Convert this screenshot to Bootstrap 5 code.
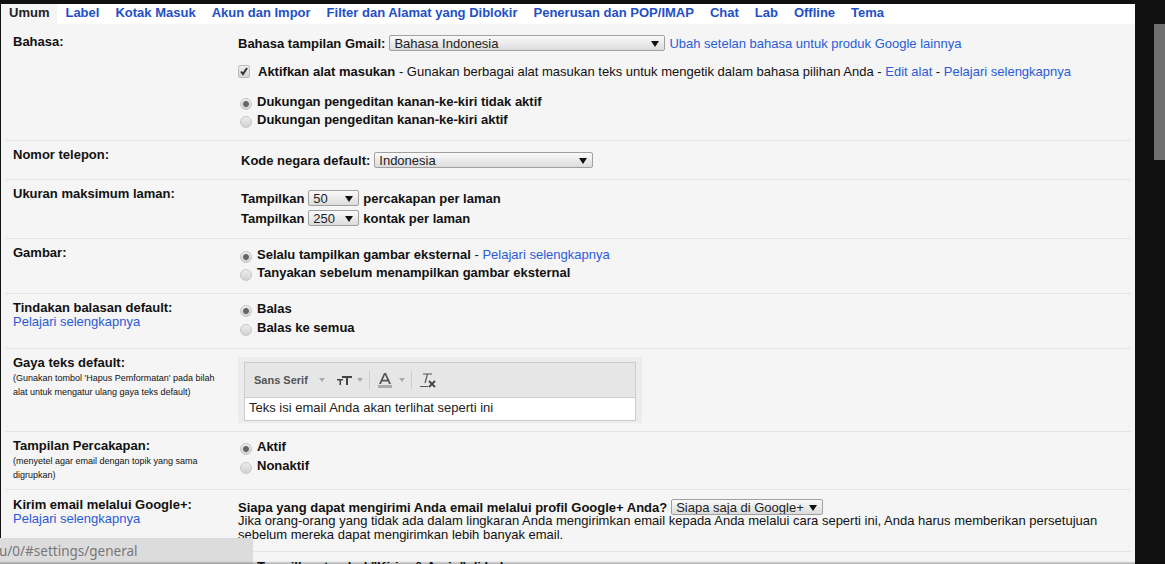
<!DOCTYPE html>
<html lang="id">
<head>
  <meta charset="UTF-8">
  <meta name="viewport" content="width=device-width, initial-scale=1.0">
  <title>Setelan Gmail</title>
  <link href="https://cdn.jsdelivr.net/npm/bootstrap@5.3.0/dist/css/bootstrap.min.css" rel="stylesheet">
  <style>
    html, body { height: 100%; overflow: hidden; }
    body {
      background: #111;
      color: #111;
      font-family: "Liberation Sans", Arial, sans-serif;
      font-size: 13px;
      line-height: 15px;
    }
    a { color: #2a5bd7; text-decoration: none; }
    .shell { width: 1134px; margin: 4px 0 0 1px; height: 560px; overflow: hidden; background: #f5f5f5; }
    .tabbar { background: #fff; height: 20px; font-weight: 700; }
    .tabbar a, .tabbar span { padding: 0 8px; line-height: 18px; }
    .tabbar a { color: #1f50c8; }
    .tab-now { background: #f5f5f5; color: #222; }
    .pane { padding: 0 4px 0 0; }
    .setrow { display: flex; border-bottom: 1px solid #e4e4e4; margin-left: 4px; }
    .setname { width: 233px; flex: none; padding-left: 8px; font-weight: 700; }
    .setname a { font-weight: 400; display: block; margin-top: -1px; }
    .setname small { display: block; width: 205px; font-weight: 400; font-size: 9px; line-height: 14px; margin-top: 1px; }
    .setval { flex: 1; }
    .setval.indent { padding-left: 3px; }
    .b { font-weight: 700; }
    .row-lang { height: 117px; padding-top: 10px; }
    .row-phone { height: 39px; padding-top: 6px; }
    .row-size { height: 59px; padding-top: 6px; }
    .row-opts { height: 55px; padding-top: 6px; }
    .row-editor { height: 83px; padding-top: 6px; }
    .row-conv { height: 58px; padding-top: 6px; }
    .row-plus { height: 62px; padding-top: 7px; }
    .row-last { padding-top: 7px; }
    .line-lang { margin-top: 1px; }
    .line-tools { margin-top: 13px; }
    .line-rtl { margin-top: 15px; }
    .line-sel { margin-top: 5px; }
    .line-sel-2 { margin-top: 4px; }
    .line-nudge { margin-top: 1px; }
    .line-img { margin-top: 2px; }
    .line-who { margin-top: 2px; }
    .plus-note { line-height: 14px; margin-top: -1px; }
    .check-label { margin-left: 8px; }
    .last-label { margin-left: 19px; }
    .gsel {
      appearance: none;
      border: 1px solid #a0a0a0;
      border-radius: 2px;
      height: 16px;
      padding: 1px 0 0 4px;
      font: 13px/14px "Liberation Sans", Arial, sans-serif;
      color: #222;
      background: url("data:image/svg+xml,%3Csvg xmlns='http://www.w3.org/2000/svg' width='8' height='7'%3E%3Cpath d='M0 1h8L4 7z' fill='%23111'/%3E%3C/svg%3E") no-repeat right 5px center, linear-gradient(#fafafa, #dcdcdc);
    }
    .w-lang { width: 276px; }
    .w-ctry { width: 219px; }
    .w-num { width: 51px; }
    .w-who { width: 152px; }
    .gcheck {
      appearance: none;
      width: 12px; height: 13px;
      border: 1px solid #bdbdbd; border-radius: 2px;
      margin: 0;
      background: url("data:image/svg+xml,%3Csvg xmlns='http://www.w3.org/2000/svg' width='10' height='11'%3E%3Cpath d='M2 5.500l2 2.500 4-6' fill='none' stroke='%23333' stroke-width='2'/%3E%3C/svg%3E") center no-repeat, linear-gradient(#f0f0f0, #d4d4d4);
    }
    .gradio {
      appearance: none;
      flex: none;
      width: 12px; height: 12px;
      border: 1px solid #c8c8c8; border-radius: 50%;
      margin: 4px 5px 0 2px;
      background: linear-gradient(#ececec, #d2d2d2);
    }
    .gradio:checked { background: radial-gradient(circle, #666 0 2.500px, transparent 3.500px), linear-gradient(#ececec, #d2d2d2); }
    .optline { display: flex; height: 19px; align-items: flex-start; }
    .optline.tight { height: 18px; }
    .editor-wrap { background: #ececec; padding: 5px 6px 2px; width: 404px; height: 66px; margin-top: 2px; }
    .editor-box { border: 1px solid #ccc; height: 59px; }
    .editor-tools { background: #e6e6e6; height: 35px; border-bottom: 1px solid #ccc; display: flex; align-items: center; padding-left: 9px; color: #555; }
    .font-name { font-size: 11px; font-weight: 700; color: #555; width: 64px; }
    .tool-size { margin-left: 11px; }
    .tool-size-arrow { margin-left: 4px; }
    .tool-sep { width: 1px; height: 18px; background: #ccc; margin: 0 8px 0 5px; }
    .tool-color { margin-top: 1px; }
    .tool-color-arrow { margin-left: 6px; }
    .editor-text { background: #fff; height: 22px; padding: 2px 4px; color: #222; }
    .status-tip {
      position: absolute; left: 0; top: 538px;
      width: 253px; height: 26px;
      background: #dcdcdc;
      color: #777;
      font-family: "Noto Sans", sans-serif;
      font-size: 13.500px;
      line-height: 26px;
      text-indent: -1px;
      overflow: hidden;
      white-space: nowrap;
    }
    .scroll-thumb { position: absolute; left: 1154px; top: 24px; width: 11px; height: 136px; background: #6f6f6f; }
    .bottom-shade { position: absolute; left: 0; right: 0; top: 561px; height: 3px; background: linear-gradient(transparent, rgba(0, 0, 0, .3)); }
  </style>
</head>
<body>

  <div class="shell">
    <div class="tabbar d-flex">
      <span class="tab-now">Umum</span>
      <a href="#">Label</a>
      <a href="#">Kotak Masuk</a>
      <a href="#">Akun dan Impor</a>
      <a href="#">Filter dan Alamat yang Diblokir</a>
      <a href="#">Penerusan dan POP/IMAP</a>
      <a href="#">Chat</a>
      <a href="#">Lab</a>
      <a href="#">Offline</a>
      <a href="#">Tema</a>
    </div>

    <div class="pane">
      <div class="setrow row-lang">
        <div class="setname">Bahasa:</div>
        <div class="setval">
          <div class="d-flex align-items-center gap-1 line-lang">
            <span class="b">Bahasa tampilan Gmail:</span>
            <select class="gsel w-lang"><option>Bahasa Indonesia</option></select>
            <a href="#">Ubah setelan bahasa untuk produk Google lainnya</a>
          </div>
          <div class="d-flex align-items-center line-tools">
            <input type="checkbox" class="gcheck" checked>
            <span class="check-label"><span class="b">Aktifkan alat masukan</span> - Gunakan berbagai alat masukan teks untuk mengetik dalam bahasa pilihan Anda - <a href="#">Edit alat</a> - <a href="#">Pelajari selengkapnya</a></span>
          </div>
          <div class="line-rtl">
            <div class="optline tight"><input type="radio" class="gradio" name="rtl" checked><span class="b">Dukungan pengeditan kanan-ke-kiri tidak aktif</span></div>
            <div class="optline tight"><input type="radio" class="gradio" name="rtl"><span class="b">Dukungan pengeditan kanan-ke-kiri aktif</span></div>
          </div>
        </div>
      </div>

      <div class="setrow row-phone">
        <div class="setname">Nomor telepon:</div>
        <div class="setval indent">
          <div class="d-flex align-items-center gap-1 line-sel">
            <span class="b">Kode negara default:</span>
            <select class="gsel w-ctry"><option>Indonesia</option></select>
          </div>
        </div>
      </div>

      <div class="setrow row-size">
        <div class="setname">Ukuran maksimum laman:</div>
        <div class="setval indent">
          <div class="d-flex align-items-center gap-1 line-sel-2">
            <span class="b">Tampilkan</span>
            <select class="gsel w-num"><option>50</option></select>
            <span class="b">percakapan per laman</span>
          </div>
          <div class="d-flex align-items-center gap-1 line-sel-2">
            <span class="b">Tampilkan</span>
            <select class="gsel w-num"><option>250</option></select>
            <span class="b">kontak per laman</span>
          </div>
        </div>
      </div>

      <div class="setrow row-opts">
        <div class="setname">Gambar:</div>
        <div class="setval">
          <div class="line-img">
            <div class="optline tight"><input type="radio" class="gradio" name="img" checked><span><span class="b">Selalu tampilkan gambar eksternal</span> - <a href="#">Pelajari selengkapnya</a></span></div>
            <div class="optline tight"><input type="radio" class="gradio" name="img"><span class="b">Tanyakan sebelum menampilkan gambar eksternal</span></div>
          </div>
        </div>
      </div>

      <div class="setrow row-opts">
        <div class="setname">Tindakan balasan default:<a href="#">Pelajari selengkapnya</a></div>
        <div class="setval">
          <div class="line-nudge">
            <div class="optline"><input type="radio" class="gradio" name="reply" checked><span class="b">Balas</span></div>
            <div class="optline"><input type="radio" class="gradio" name="reply"><span class="b">Balas ke semua</span></div>
          </div>
        </div>
      </div>

      <div class="setrow row-editor">
        <div class="setname">Gaya teks default:
          <small>(Gunakan tombol 'Hapus Pemformatan' pada bilah alat untuk mengatur ulang gaya teks default)</small>
        </div>
        <div class="setval">
          <div class="editor-wrap">
            <div class="editor-box">
              <div class="editor-tools">
                <span class="font-name">Sans Serif</span>
                <svg width="8" height="4" viewBox="0 0 8 4"><path d="M1 0h6L4 4z" fill="#aaa"/></svg>
                <svg class="tool-size" width="15" height="9" viewBox="0 0 15 9"><path d="M5 0h10v2h-4v7H9V2H5zM0 3h6v1.500H4V9H2.500V4.500H0z" fill="#444"/></svg>
                <svg class="tool-size-arrow" width="8" height="4" viewBox="0 0 8 4"><path d="M1 0h6L4 4z" fill="#aaa"/></svg>
                <span class="tool-sep"></span>
                <svg class="tool-color" width="14" height="15" viewBox="0 0 14 15"><path d="M6 0h2l5 11h-2l-1-2.500H4L3 11H1zM4.800 6.800h4.400L7 1.800z" fill="#555"/><rect y="12" width="14" height="3" fill="#aaa"/></svg>
                <svg class="tool-color-arrow" width="8" height="4" viewBox="0 0 8 4"><path d="M1 0h6L4 4z" fill="#aaa"/></svg>
                <span class="tool-sep"></span>
                <svg width="16" height="15" viewBox="0 0 16 15"><path d="M3 1h9M7.500 1L5 10M0 13.500h8" stroke="#555" stroke-width="1.200" fill="none"/><path d="M9 8l6 6M15 8l-6 6" stroke="#444" stroke-width="1.800"/></svg>
              </div>
              <div class="editor-text">Teks isi email Anda akan terlihat seperti ini</div>
            </div>
          </div>
        </div>
      </div>

      <div class="setrow row-conv">
        <div class="setname">Tampilan Percakapan:
          <small>(menyetel agar email dengan topik yang sama digrupkan)</small>
        </div>
        <div class="setval">
          <div class="line-nudge">
            <div class="optline"><input type="radio" class="gradio" name="conv" checked><span class="b">Aktif</span></div>
            <div class="optline"><input type="radio" class="gradio" name="conv"><span class="b">Nonaktif</span></div>
          </div>
        </div>
      </div>

      <div class="setrow row-plus">
        <div class="setname">Kirim email melalui Google+:<a href="#">Pelajari selengkapnya</a></div>
        <div class="setval">
          <div class="d-flex align-items-center gap-1 line-who">
            <span class="b">Siapa yang dapat mengirimi Anda email melalui profil Google+ Anda?</span>
            <select class="gsel w-who"><option>Siapa saja di Google+</option></select>
          </div>
          <div class="plus-note">Jika orang-orang yang tidak ada dalam lingkaran Anda mengirimkan email kepada Anda melalui cara seperti ini, Anda harus memberikan persetujuan sebelum mereka dapat mengirimkan lebih banyak email.</div>
        </div>
      </div>

      <div class="setrow row-last">
        <div class="setname"></div>
        <div class="setval"><span class="b last-label">Tampilkan tombol "Kirim &amp; Arsip" di balasan</span></div>
      </div>
    </div>
  </div>

  <div class="scroll-thumb"></div>
  <div class="status-tip">u/0/#settings/general</div>
  <div class="bottom-shade"></div>

  <script src="https://cdn.jsdelivr.net/npm/bootstrap@5.3.0/dist/js/bootstrap.bundle.min.js"></script>
</body>
</html>
